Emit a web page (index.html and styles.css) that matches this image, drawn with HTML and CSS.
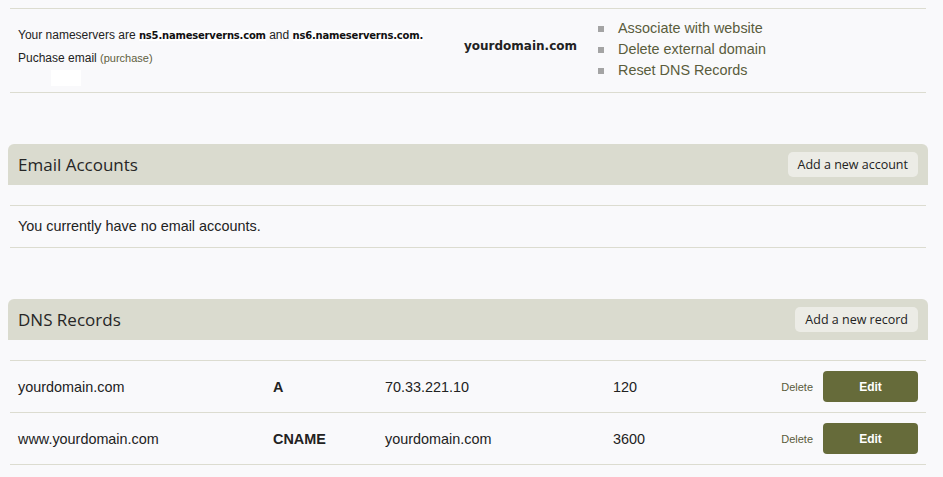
FILE: index.html
```html
<!DOCTYPE html>
<html>
<head>
<meta charset="utf-8">
<link rel="stylesheet" href="styles.css">
</head>
<body>
<div class="page">
  <section class="domain-panel">
    <div class="ns-info">
      <p class="ns-line">Your nameservers are <b class="ns">ns5.nameserverns.com</b> and <b class="ns">ns6.nameserverns.com.</b></p>
      <p class="ns-line">Puchase email <a class="small-link" href="#">(purchase)</a></p>
      <span class="patch"></span>
    </div>
    <div class="domain-name">yourdomain.com</div>
    <ul class="actions">
      <li><a href="#">Associate with website</a></li>
      <li><a href="#">Delete external domain</a></li>
      <li><a href="#">Reset DNS Records</a></li>
    </ul>
  </section>

  <section class="block email-block">
    <div class="block-head">
      <h2>Email Accounts</h2>
      <button class="head-btn">Add a new account</button>
    </div>
    <div class="rows">
      <div class="row empty-row">You currently have no email accounts.</div>
    </div>
  </section>

  <section class="block dns-block">
    <div class="block-head">
      <h2>DNS Records</h2>
      <button class="head-btn">Add a new record</button>
    </div>
    <div class="rows">
      <div class="row dns-row">
        <span class="c-name">yourdomain.com</span>
        <span class="c-type">A</span>
        <span class="c-value">70.33.221.10</span>
        <span class="c-ttl">120</span>
        <a class="c-delete" href="#">Delete</a>
        <button class="edit-btn">Edit</button>
      </div>
      <div class="row dns-row">
        <span class="c-name">www.yourdomain.com</span>
        <span class="c-type">CNAME</span>
        <span class="c-value">yourdomain.com</span>
        <span class="c-ttl">3600</span>
        <a class="c-delete" href="#">Delete</a>
        <button class="edit-btn">Edit</button>
      </div>
    </div>
  </section>
</div>
</body>
</html>
```

FILE: styles.css
```css
html, body {
  margin: 0;
  padding: 0;
  background: #f9f9fb;
}
body {
  padding: 8px;
  font-family: "Liberation Sans", Arial, sans-serif;
  color: #222;
}
.page {
  width: 920px;
}
a {
  text-decoration: none;
}

/* top domain panel */
.domain-panel {
  margin: 0 2px;
  border-top: 1px solid #dcdcd0;
  border-bottom: 1px solid #dcdcd0;
  height: 83px;
  display: flex;
}
.ns-info {
  width: 446px;
  padding: 15px 0 0 8px;
  font-size: 12px;
}
.ns-line {
  margin: 0;
  line-height: 22px;
}
.ns {
  font-family: "DejaVu Sans", sans-serif;
  font-size: 10px;
  font-weight: bold;
  color: #111;
  background: #fff;
  letter-spacing: -0.2px;
}
.small-link {
  font-size: 11px;
  color: #5f6040;
}
.patch {
  display: block;
  width: 30px;
  height: 16px;
  margin: 1px 0 0 33px;
  background: #fff;
}
.domain-name {
  width: 134px;
  padding-top: 27px;
  line-height: 20px;
  font-family: "DejaVu Sans", sans-serif;
  font-size: 12px;
  font-weight: bold;
  color: #222;
}
.actions {
  list-style: none;
  margin: 0;
  padding: 9px 0 0 0;
}
.actions li {
  display: flex;
  align-items: center;
  line-height: 21px;
  font-size: 14.4px;
}
.actions li::before {
  content: "";
  width: 6px;
  height: 6px;
  background: #a4a4a4;
  margin-right: 14px;
}
.actions a {
  color: #5a5c3c;
}

/* blocks */
.block {
  margin-top: 51px;
}
.block-head {
  height: 41px;
  background: #dadbcf;
  border-radius: 6px 6px 0 0;
  display: flex;
  align-items: center;
  justify-content: space-between;
  padding: 0 10px;
}
.block-head h2 {
  margin: 0;
  font-family: "Open Sans", sans-serif;
  font-weight: normal;
  font-size: 17px;
  color: #262626;
}
.head-btn {
  height: 25px;
  border: none;
  border-radius: 5px;
  background: #ecece6;
  font-family: "Open Sans", sans-serif;
  font-size: 12.5px;
  color: #222;
  padding: 0 10px;
}
.rows {
  margin: 20px 2px 0;
  border-bottom: 1px solid #dcdcd0;
}
.row {
  border-top: 1px solid #dcdcd0;
  padding: 0 8px;
  font-size: 14.4px;
}
.empty-row {
  height: 41px;
  line-height: 41px;
}
.dns-row {
  height: 51px;
  display: grid;
  grid-template-columns: 255px 112px 228px 1fr auto 95px;
  align-items: center;
}
.c-type {
  font-weight: bold;
}
.c-delete {
  font-size: 11px;
  color: #5a5b3c;
  margin-right: 10px;
}
.edit-btn {
  height: 31px;
  border: none;
  border-radius: 4px;
  background: #666b3a;
  color: #fff;
  font-family: "Liberation Sans", Arial, sans-serif;
  font-weight: bold;
  font-size: 12px;
}
```
